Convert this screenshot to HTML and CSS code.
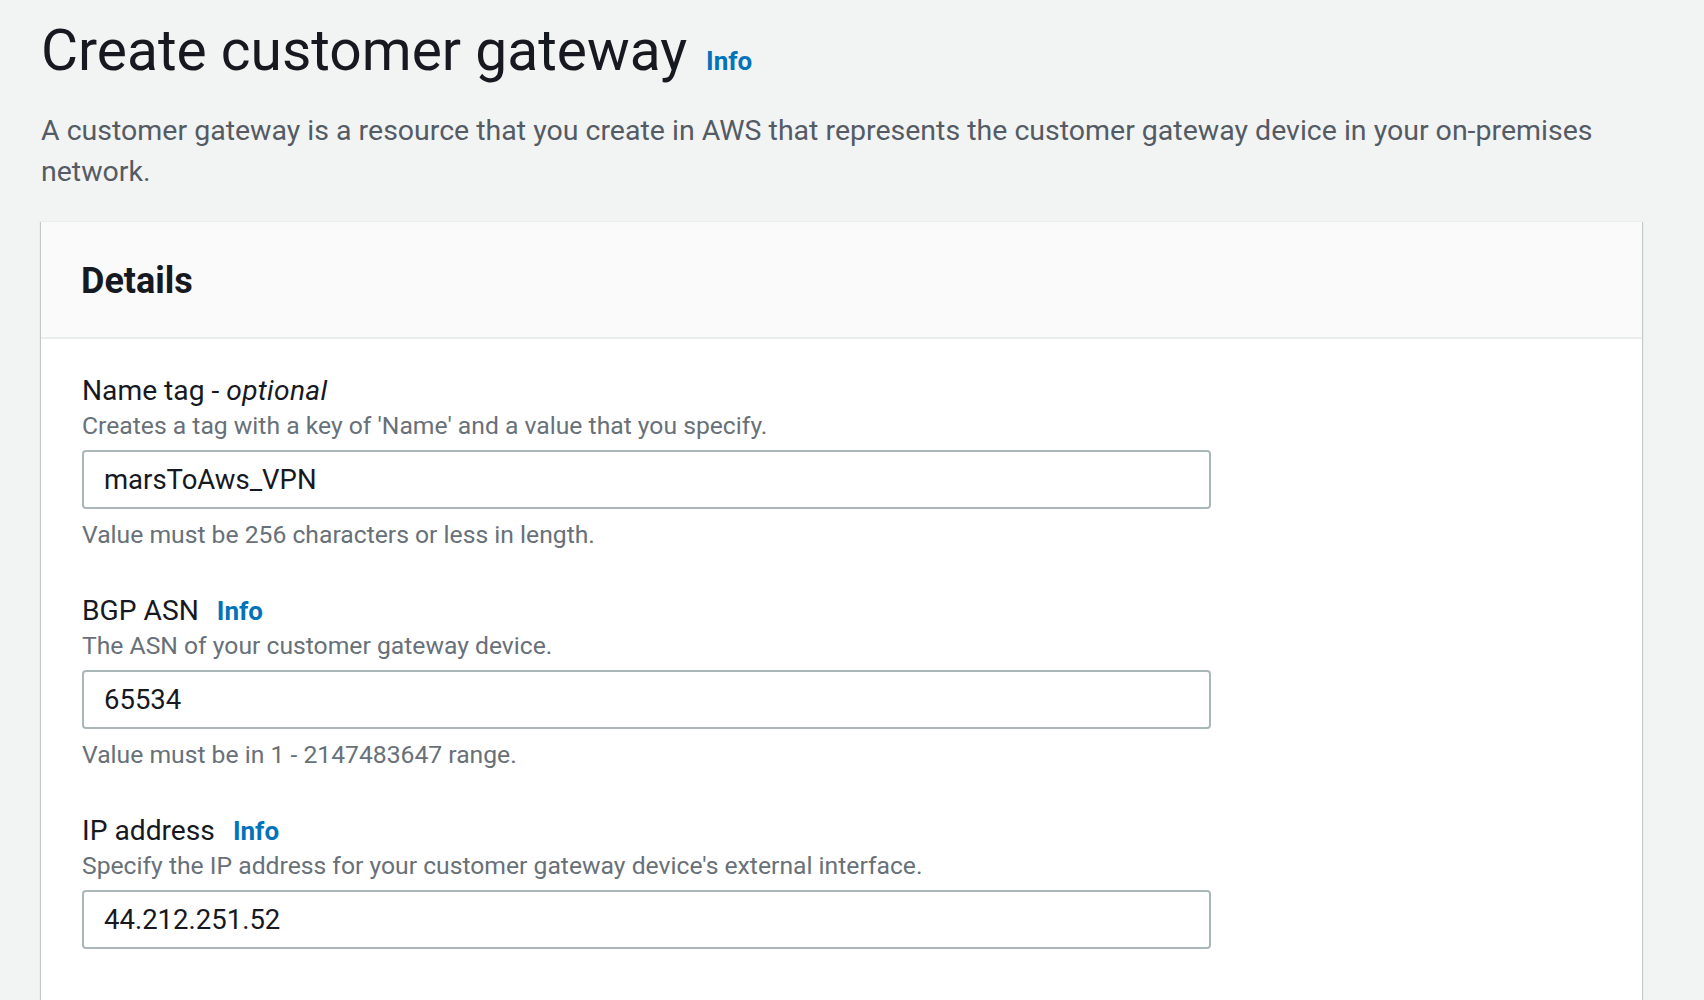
FILE: index.html
```html
<!DOCTYPE html>
<html lang="en">
<head>
<meta charset="utf-8">
<title>Create customer gateway</title>
<link rel="stylesheet" href="styles.css">
</head>
<body>
<main class="page">
  <header class="page-header">
    <div class="title-row">
      <h1 class="title">Create customer gateway</h1>
      <a class="info info-title" href="#">Info</a>
    </div>
    <p class="page-desc">A customer gateway is a resource that you create in AWS that represents the customer gateway device in your on-premises network.</p>
  </header>

  <section class="card">
    <div class="card-header">
      <h2 class="card-title">Details</h2>
    </div>
    <div class="card-body">
      <div class="field">
        <div class="label-row"><span class="label">Name tag - <i>optional</i></span></div>
        <div class="field-desc">Creates a tag with a key of 'Name' and a value that you specify.</div>
        <div class="input">marsToAws_VPN</div>
        <div class="constraint">Value must be 256 characters or less in length.</div>
      </div>

      <div class="field">
        <div class="label-row"><span class="label">BGP ASN</span><a class="info" href="#">Info</a></div>
        <div class="field-desc">The ASN of your customer gateway device.</div>
        <div class="input">65534</div>
        <div class="constraint">Value must be in 1 - 2147483647 range.</div>
      </div>

      <div class="field field-last">
        <div class="label-row"><span class="label">IP address</span><a class="info" href="#">Info</a></div>
        <div class="field-desc">Specify the IP address for your customer gateway device's external interface.</div>
        <div class="input">44.212.251.52</div>
      </div>

      <div class="field">
        <div class="label-row"><span class="label">Certificate ARN - <i>optional</i></span></div>
        <div class="field-desc">The ARN of a private certificate provisioned in AWS Certificate Manager (ACM).</div>
      </div>
    </div>
  </section>
</main>
</body>
</html>
```

FILE: styles.css
```css
* { box-sizing: border-box; }

html, body {
  margin: 0;
  padding: 0;
  background: #f2f3f3;
  font-family: Roboto, "Liberation Sans", Arial, sans-serif;
  color: #16191f;
}

.page {
  padding: 17px 62px 0 41px;
}

.title-row {
  display: flex;
  align-items: baseline;
  gap: 19px;
}

.title {
  margin: 0;
  font-size: 56.9px;
  line-height: 68px;
  font-weight: 400;
  color: #16191f;
}

.info {
  color: #0073bb;
  font-weight: 700;
  font-size: 26px;
  text-decoration: none;
}

.page-desc {
  margin: 25px 0 0 0;
  font-size: 28.5px;
  line-height: 41px;
  color: #545b64;
  max-width: 1600px;
}

.card {
  margin-top: 29px;
  background: #ffffff;
  border-top: 1px solid #eaeded;
  box-shadow: 0 1px 1px 0 rgba(0, 28, 36, 0.3),
              1px 1px 1px 0 rgba(0, 28, 36, 0.15),
              -1px 1px 1px 0 rgba(0, 28, 36, 0.15);
}

.card-header {
  background: #fafafa;
  padding: 37px 40px 34px 40px;
  border-bottom: 2px solid #eaeded;
}

.card-title {
  margin: 0;
  font-size: 36px;
  line-height: 44px;
  font-weight: 700;
  color: #16191f;
}

.card-body {
  padding: 33px 40px 40px 41px;
}

.field {
  margin-bottom: 40px;
}

.field-last {
  margin-bottom: 46px;
}

.label-row {
  display: flex;
  align-items: baseline;
  gap: 18px;
  line-height: 38px;
}

.label {
  font-size: 28.2px;
  color: #16191f;
}

.label i {
  font-style: italic;
  letter-spacing: 0.3px;
}

.field-desc {
  margin-top: -1px;
  font-size: 24.7px;
  line-height: 34px;
  color: #687078;
}

.input {
  margin-top: 7px;
  width: 1129px;
  height: 59px;
  border: 2px solid #aab7b8;
  border-radius: 4px;
  background: #ffffff;
  padding: 0 20px;
  font-size: 27.5px;
  line-height: 55px;
  color: #16191f;
}

.constraint {
  margin-top: 9px;
  font-size: 24.7px;
  line-height: 34px;
  color: #687078;
}
```
